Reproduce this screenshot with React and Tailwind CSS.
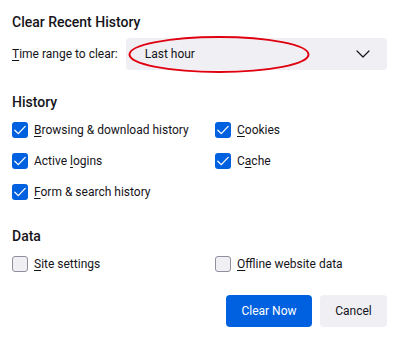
import { ChevronDown } from 'lucide-react'

function Check({ checked }) {
  return checked ? (
    <span className="w-4 h-4 rounded-[3px] bg-[#0061e0] flex items-center justify-center shrink-0">
      <svg width="14" height="14" viewBox="0 0 14 14" fill="none">
        <path d="M1.8 7.2 L5.3 10.6 L12.2 3.4" stroke="white" strokeWidth="1.3" strokeLinecap="round" strokeLinejoin="round" />
      </svg>
    </span>
  ) : (
    <span className="w-4 h-4 rounded-[3px] bg-[#f0f0f4] border border-[#8f8f9d] shrink-0"></span>
  )
}

function Option({ checked, pre, keyChar, post }) {
  return (
    <div className="flex items-center gap-[6px] h-4">
      <Check checked={checked} />
      <span className="text-[12px] leading-4 whitespace-nowrap">
        {pre}<span className="underline underline-offset-2">{keyChar}</span>{post}
      </span>
    </div>
  )
}

export default function App() {
  return (
    <div className="w-[394px] h-[340px] bg-white text-[#15141a] pl-3 pr-[7px] pt-3" style={{ fontFamily: 'Roboto, "Noto Sans", sans-serif' }}>
      <h1 className="text-[14px] leading-5 font-medium">Clear Recent History</h1>

      <div className="flex items-center gap-2 mt-[6px]">
        <span className="text-[12px] whitespace-nowrap">
          <span className="underline underline-offset-2">T</span>ime range to clear:
        </span>
        <div className="relative flex-1 h-8 bg-[#f0f0f4] rounded-[4px] flex items-center justify-between pl-[19px] pr-[12px]">
          <span className="text-[12px]">Last hour</span>
          <ChevronDown size={24} strokeWidth={1.2} />
          <svg className="absolute left-[2px] top-[-3px]" width="182" height="39" viewBox="0 0 182 39" fill="none">
            <ellipse cx="91" cy="19.5" rx="89.5" ry="17.5" stroke="#e00010" strokeWidth="2" />
          </svg>
        </div>
      </div>

      <h2 className="text-[14px] leading-5 font-medium mt-[22px]">History</h2>
      <div className="grid grid-cols-[203px_1fr] gap-y-[15px] mt-[10px]">
        <Option checked pre="" keyChar="B" post="rowsing & download history" />
        <Option checked pre="" keyChar="C" post="ookies" />
        <Option checked pre="Active " keyChar="l" post="ogins" />
        <Option checked pre="C" keyChar="a" post="che" />
        <Option checked pre="" keyChar="F" post="orm & search history" />
      </div>

      <h2 className="text-[14px] leading-5 font-medium mt-[26px]">Data</h2>
      <div className="grid grid-cols-[203px_1fr] mt-[10px]">
        <Option pre="" keyChar="S" post="ite settings" />
        <Option pre="" keyChar="O" post="ffline website data" />
      </div>

      <div className="flex justify-end gap-2 mt-[23px]">
        <button className="h-8 w-[86px] rounded-[4px] bg-[#0061e0] text-white text-[12px]">Clear Now</button>
        <button className="h-8 w-[67px] rounded-[4px] bg-[#f0f0f4] text-[12px]">Cancel</button>
      </div>
    </div>
  )
}
